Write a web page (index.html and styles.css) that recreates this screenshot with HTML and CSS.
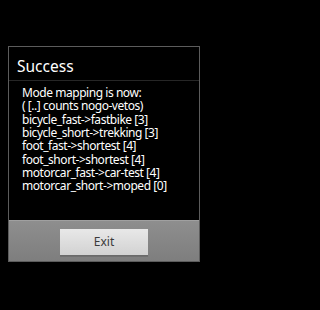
FILE: index.html
```html
<!DOCTYPE html>
<html>
<head>
<meta charset="utf-8">
<link rel="stylesheet" href="styles.css">
</head>
<body>
<div class="dialog">
  <div class="title">Success</div>
  <div class="content">
    <div class="line">Mode mapping is now:</div>
    <div class="line">( [..] counts nogo-vetos)</div>
    <div class="line">bicycle_fast-&gt;fastbike [3]</div>
    <div class="line">bicycle_short-&gt;trekking [3]</div>
    <div class="line">foot_fast-&gt;shortest [4]</div>
    <div class="line">foot_short-&gt;shortest [4]</div>
    <div class="line">motorcar_fast-&gt;car-test [4]</div>
    <div class="line">motorcar_short-&gt;moped [0]</div>
  </div>
  <div class="bar">
    <div class="button">Exit</div>
  </div>
</div>
</body>
</html>
```
FILE: styles.css
```css
html, body {
  margin: 0;
  padding: 0;
  background: #000;
}
body {
  font-family: "Noto Sans", "Open Sans", sans-serif;
  color: #fff;
  padding-top: 46px;
  overflow: hidden;
}
.dialog {
  margin-left: 8px;
  width: 190px;
  border: 1px solid #5c5c5c;
  background: #000;
}
.title {
  height: 33px;
  padding-left: 8px;
  font-size: 15.5px;
  line-height: 38px;
  border-bottom: 1px solid #262626;
}
.content {
  padding: 5px 0 0 13px;
  height: 134px;
  font-size: 12px;
  line-height: 13.33px;
  letter-spacing: -0.45px;
}
.line {
  white-space: nowrap;
  height: 13.33px;
}
.bar {
  height: 40px;
  border-top: 1px solid #a0a0a0;
  background: linear-gradient(#8e8e8e, #7e7e7e);
  display: flex;
  justify-content: center;
  align-items: flex-start;
}
.button {
  margin-top: 8px;
  width: 88px;
  height: 26px;
  background: linear-gradient(#e8e8e8, #d2d2d2);
  border-bottom: 1px solid #6a6a6a;
  box-shadow: 0 1px 0 #707070;
  color: #3a3a3a;
  font-size: 12px;
  line-height: 26px;
  text-align: center;
}
```
